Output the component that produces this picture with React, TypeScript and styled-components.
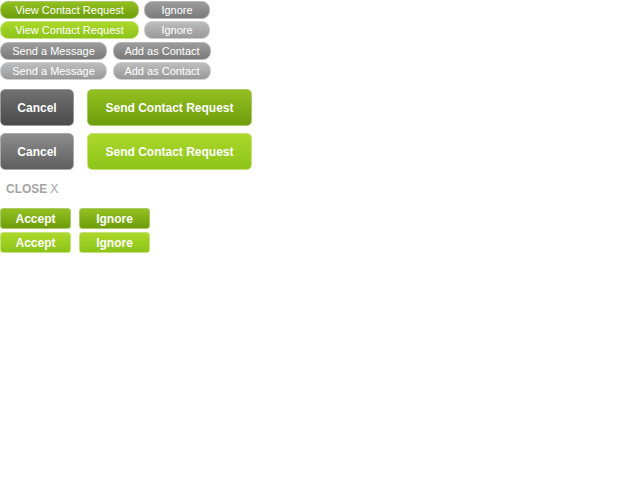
import React from "react";
import styled, { createGlobalStyle, css } from "styled-components";

const Global = createGlobalStyle`
  html, body { margin: 0; padding: 0; background: #fff; }
  body { font-family: "Liberation Sans", Arial, sans-serif; }
`;

type Tone = "green" | "lightgreen" | "grey" | "lightgrey" | "dark" | "darklight";

const tones: Record<Tone, ReturnType<typeof css>> = {
  green: css`
    background: linear-gradient(#93c020, #6d9d0b);
    border-color: #a9c96a;
  `,
  lightgreen: css`
    background: linear-gradient(#acd82a, #8cc41a);
    border-color: #c6e27a;
  `,
  grey: css`
    background: linear-gradient(#9c9c9c, #7a7a7a);
    border-color: #b6b6b6;
  `,
  lightgrey: css`
    background: linear-gradient(#bdbdbd, #999999);
    border-color: #cfcfcf;
  `,
  dark: css`
    background: linear-gradient(#717171, #4a4a4a);
    border-color: #9a9a9a;
  `,
  darklight: css`
    background: linear-gradient(#8c8c8c, #5f5f5f);
    border-color: #aaaaaa;
  `,
};

const Page = styled.div`
  display: flex;
  flex-direction: column;
  align-items: flex-start;
  padding-top: 1px;
`;

const Row = styled.div<{ $gap: number; $mb: number }>`
  display: flex;
  gap: ${(p) => p.$gap}px;
  margin-bottom: ${(p) => p.$mb}px;
`;

const Pill = styled.button<{ $tone: Tone; $w: number }>`
  box-sizing: border-box;
  width: ${(p) => p.$w}px;
  height: 18px;
  padding: 0;
  border: 1px solid;
  border-radius: 8px;
  color: #fff;
  font-family: "Liberation Sans", Arial, sans-serif;
  font-size: 11px;
  line-height: 16px;
  text-align: center;
  ${(p) => tones[p.$tone]}
`;

const Big = styled.button<{ $tone: Tone; $w: number }>`
  box-sizing: border-box;
  width: ${(p) => p.$w}px;
  height: 37px;
  padding: 0;
  border: 1px solid;
  border-radius: 5px;
  color: #fff;
  font-family: "Liberation Sans", Arial, sans-serif;
  font-weight: bold;
  font-size: 12px;
  text-align: center;
  ${(p) => tones[p.$tone]}
`;

const Small = styled.button<{ $tone: Tone }>`
  box-sizing: border-box;
  width: 71px;
  height: 21px;
  padding: 0;
  border: 1px solid;
  border-radius: 3px;
  color: #fff;
  font-family: "Liberation Sans", Arial, sans-serif;
  font-weight: bold;
  font-size: 12px;
  text-align: center;
  ${(p) => tones[p.$tone]}
`;

const Close = styled.div`
  margin: 2px 0 0 6px;
  height: 26px;
  line-height: 14px;
  font-size: 12px;
  color: #a4a4a4;
  font-family: "Liberation Sans", Arial, sans-serif;
  b { font-weight: bold; }
  span { font-weight: normal; margin-left: 3px; }
`;

export default function App() {
  return (
    <>
      <Global />
      <Page>
        <Row $gap={5} $mb={2}>
          <Pill $tone="green" $w={139}>View Contact Request</Pill>
          <Pill $tone="grey" $w={66}>Ignore</Pill>
        </Row>
        <Row $gap={5} $mb={3}>
          <Pill $tone="lightgreen" $w={139}>View Contact Request</Pill>
          <Pill $tone="lightgrey" $w={66}>Ignore</Pill>
        </Row>
        <Row $gap={6} $mb={2}>
          <Pill $tone="grey" $w={107}>Send a Message</Pill>
          <Pill $tone="grey" $w={98}>Add as Contact</Pill>
        </Row>
        <Row $gap={6} $mb={9}>
          <Pill $tone="lightgrey" $w={107}>Send a Message</Pill>
          <Pill $tone="lightgrey" $w={98}>Add as Contact</Pill>
        </Row>
        <Row $gap={13} $mb={7}>
          <Big $tone="dark" $w={74}>Cancel</Big>
          <Big $tone="green" $w={165}>Send Contact Request</Big>
        </Row>
        <Row $gap={13} $mb={10}>
          <Big $tone="darklight" $w={74}>Cancel</Big>
          <Big $tone="lightgreen" $w={165}>Send Contact Request</Big>
        </Row>
        <Close>
          <b>CLOSE</b>
          <span>X</span>
        </Close>
        <Row $gap={8} $mb={3}>
          <Small $tone="green">Accept</Small>
          <Small $tone="green">Ignore</Small>
        </Row>
        <Row $gap={8} $mb={0}>
          <Small $tone="lightgreen">Accept</Small>
          <Small $tone="lightgreen">Ignore</Small>
        </Row>
      </Page>
    </>
  );
}
